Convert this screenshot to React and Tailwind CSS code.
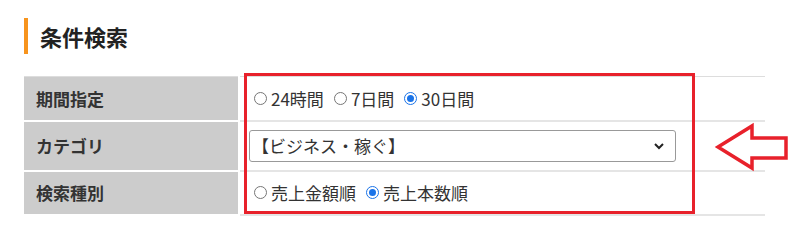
import React from "react";

function Radio({ checked, label }) {
  return (
    <label className="flex items-center gap-[4px] mr-[10px]">
      {checked ? (
        <span className="w-[13px] h-[13px] rounded-full border-[1.5px] border-[#1a73e8] flex items-center justify-center">
          <span className="w-[7px] h-[7px] rounded-full bg-[#1a73e8]"></span>
        </span>
      ) : (
        <span className="w-[13px] h-[13px] rounded-full border border-[#767676] bg-white"></span>
      )}
      <span>{label}</span>
    </label>
  );
}

export default function App() {
  return (
    <div
      className="w-[800px] h-[241px] bg-white text-[#333] relative"
      style={{ fontFamily: '"Noto Sans CJK JP", "Noto Sans", sans-serif' }}
    >
      <div className="pt-[18px] pl-[24px] flex items-center">
        <div className="w-[4px] h-[36px] bg-[#f7941d]"></div>
        <h2 className="ml-[12px] text-[22px] font-bold text-[#222] leading-none">条件検索</h2>
      </div>

      <div className="relative ml-[24px] mt-[22px] w-[741px]">
        <table className="w-full border-collapse text-[17px]">
          <tbody>
            <tr className="h-[44px] border-t border-[#ddd]">
              <th className="w-[215px] bg-[#cccccc] text-left pl-[12px] font-bold border-r-2 border-b-2 border-white">期間指定</th>
              <td className="pl-[14px] border-b-2 border-[#e5e5e5]">
                <div className="flex items-center">
                  <Radio label="24時間" />
                  <Radio label="7日間" />
                  <Radio label="30日間" checked />
                </div>
              </td>
            </tr>
            <tr className="h-[50px]">
              <th className="bg-[#cccccc] text-left pl-[12px] font-bold border-r-2 border-b-2 border-white">カテゴリ</th>
              <td className="pl-[9px] border-b-2 border-[#e5e5e5]">
                <div className="w-[427px] h-[32px] border border-[#999] rounded-[3px] flex items-center justify-between pl-[2px] pr-[10px]">
                  <span>【ビジネス・稼ぐ】</span>
                  <svg width="12" height="12" viewBox="0 0 12 12">
                    <path d="M2 4 L6 8 L10 4" fill="none" stroke="#222" strokeWidth="2" />
                  </svg>
                </div>
              </td>
            </tr>
            <tr className="h-[44px]">
              <th className="bg-[#cccccc] text-left pl-[12px] font-bold border-r-2 border-b-2 border-white">検索種別</th>
              <td className="pl-[14px] border-b-2 border-[#e5e5e5]">
                <div className="flex items-center">
                  <Radio label="売上金額順" />
                  <Radio label="売上本数順" checked />
                </div>
              </td>
            </tr>
          </tbody>
        </table>
        <div className="absolute left-[220px] top-[-3px] w-[451px] h-[141px] border-[3px] border-[#e8212b]"></div>
      </div>

      <svg className="absolute left-[714px] top-[122px]" width="76" height="50" viewBox="0 0 76 50">
        <path
          d="M4 25 L38 4 L38 16 L72 16 L72 36 L38 36 L38 46 Z"
          fill="none"
          stroke="#e8212b"
          strokeWidth="3.5"
          strokeLinejoin="miter"
        />
      </svg>
    </div>
  );
}
